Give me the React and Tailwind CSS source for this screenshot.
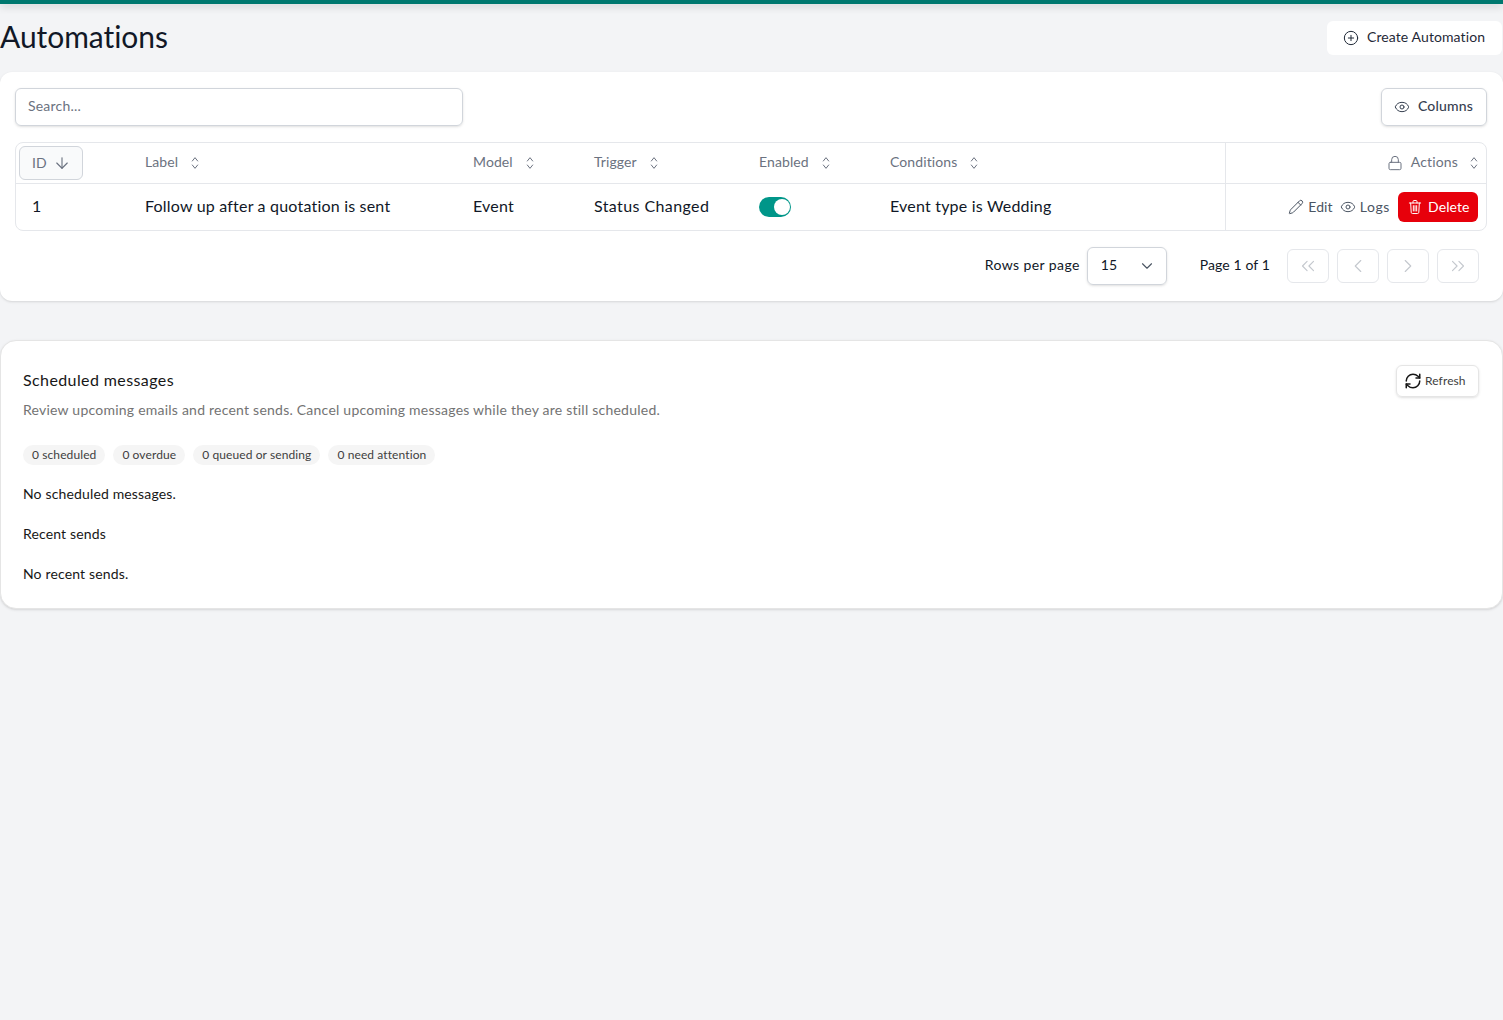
import {
  ArrowDown,
  ChevronDown,
  ChevronLeft,
  ChevronRight,
  ChevronsLeft,
  ChevronsRight,
  CirclePlus,
  Eye,
  Lock,
  Pencil,
  RefreshCw,
} from 'lucide-react'

const columns = [
  { name: 'Label', width: 'w-[328px]' },
  { name: 'Model', width: 'w-[121px]' },
  { name: 'Trigger', width: 'w-[165px]' },
  { name: 'Enabled', width: 'w-[131px]' },
  { name: 'Conditions', width: 'w-[335px]' },
]

const pageIcons = [ChevronsLeft, ChevronLeft, ChevronRight, ChevronsRight]
const badges = ['0 scheduled', '0 overdue', '0 queued or sending', '0 need attention']

function SortIcon() {
  return (
    <svg viewBox="0 0 24 24" fill="none" stroke="currentColor" strokeWidth="1.5" strokeLinecap="round" strokeLinejoin="round" className="w-[16px] h-[16px] mt-[2px]">
      <path d="M8 9l4-5 4 5" />
      <path d="M8 15l4 5 4-5" />
    </svg>
  )
}

function TrashIcon() {
  return (
    <svg viewBox="0 0 24 24" fill="none" stroke="currentColor" strokeWidth="1.5" strokeLinecap="round" strokeLinejoin="round" className="w-[16px] h-[16px]">
      <path d="M3.5 6h17" />
      <path d="M5.5 6l.8 14a2 2 0 0 0 2 1.8h7.4a2 2 0 0 0 2-1.8l.8-14" />
      <path d="M9 6V3.8A1.5 1.5 0 0 1 10.5 2.3h3A1.5 1.5 0 0 1 15 3.8V6" />
      <path d="M9.5 10v8" />
      <path d="M12 10v8" />
      <path d="M14.5 10v8" />
    </svg>
  )
}

function Toggle() {
  return (
    <div className="flex items-center w-[32px] h-[20px] rounded-full bg-[#009689] pl-[15px]">
      <div className="w-[16px] h-[16px] rounded-full bg-white" />
    </div>
  )
}

export default function App() {
  return (
    <div className="min-h-[1020px] bg-[#f3f4f6] text-[#111827] font-['Lato',sans-serif] tracking-[0.2px]">
      <div className="h-[4px] bg-[#00786f] shadow-[0_2px_8px_rgba(0,0,0,0.2)]" />

      {/* Page header */}
      <div className="flex items-center justify-between h-[68px] pr-px">
        <h1 className="text-[30px] leading-9 -mt-[4px] tracking-[-0.05px]">Automations</h1>
        <button className="flex items-center gap-[8px] h-[34px] w-[175px] pl-[16px] bg-white rounded-md text-sm tracking-[0.1px] text-[#1f2937]">
          <CirclePlus className="w-[16px] h-[16px]" strokeWidth={1.5} />
          <span className="pb-[2px]">Create Automation</span>
        </button>
      </div>

      {/* Table card */}
      <div className="bg-white rounded-xl shadow-sm pl-[15px] pr-[16px] pt-[16px] h-[229px]">
        <div className="flex items-center justify-between">
          <div className="flex items-center w-[448px] h-[38px] px-[12px] pb-[2px] border border-[#d1d5db] rounded-md shadow-sm text-sm text-[#6b7280]">
            Search...
          </div>
          <button className="flex items-center gap-[8px] w-[106px] h-[38px] pl-[12px] border border-[#d1d5db] rounded-md shadow-sm text-sm font-medium tracking-[0.15px] text-[#374151]">
            <Eye className="w-[16px] h-[16px]" strokeWidth={1.5} />
            <span className="pb-[2px]">Columns</span>
          </button>
        </div>

        <div className="mt-[16px] border border-[#e5e7eb] rounded-lg">
          <div className="flex h-[41px] border-b border-[#e5e7eb] text-sm tracking-[0.1px] text-[#6b7280]">
            <div className="flex items-center w-[129px] pl-[3px]">
              <div className="flex items-center gap-[6px] w-[64px] h-[34px] pl-[12px] bg-[#f9fafb] border border-[#d1d5db] rounded-md">
                <span className="pb-[1px]">ID</span>
                <ArrowDown className="w-[18px] h-[18px]" strokeWidth={1.5} />
              </div>
            </div>
            {columns.map((col) => (
              <div key={col.name} className={`flex items-center gap-[9px] pb-[2px] ${col.width}`}>
                {col.name}
                <SortIcon />
              </div>
            ))}
            <div className="flex flex-1 items-center justify-end gap-[8px] pr-[4px] pb-[2px] border-l border-[#e5e7eb]">
              <Lock className="w-[16px] h-[16px] mt-[2px]" strokeWidth={1.5} />
              <span className="tracking-[0.15px]">Actions</span>
              <SortIcon />
            </div>
          </div>

          <div className="flex h-[46px] text-base">
            <div className="flex items-center w-[129px] pl-[16px] pb-[2px]">1</div>
            <div className="flex items-center w-[328px] pb-[2px]">Follow up after a quotation is sent</div>
            <div className="flex items-center w-[121px] pb-[2px]">Event</div>
            <div className="flex items-center w-[165px] pb-[2px] tracking-[0.4px]">Status Changed</div>
            <div className="flex items-center w-[131px] pb-[1px]"><Toggle /></div>
            <div className="flex items-center w-[335px] pb-[2px]">Event type is Wedding</div>
            <div className="flex flex-1 items-center justify-end pr-[8px] border-l border-[#e5e7eb] text-sm tracking-[0.1px] text-[#4b5563]">
              <span className="flex items-center gap-[4px]">
                <Pencil className="w-[16px] h-[16px]" strokeWidth={1.5} />
                Edit
              </span>
              <span className="flex items-center gap-[4px] ml-[7px]">
                <Eye className="w-[16px] h-[16px]" strokeWidth={1.5} />
                <span className="tracking-[0.6px]">Logs</span>
              </span>
              <button className="flex items-center gap-[5px] h-[30px] w-[80px] ml-[8px] pl-[9px] pb-[1px] bg-[#e7000b] rounded-md text-white">
                <TrashIcon />
                Delete
              </button>
            </div>
          </div>
        </div>

        <div className="flex items-center justify-end mt-[16px] pr-[8px] text-sm">
          <span className="pb-[2px] tracking-[0.4px]">Rows per page</span>
          <div className="flex items-center justify-between w-[80px] h-[38px] ml-[7px] pl-[13px] pr-[10px] border border-[#d1d5db] rounded-md shadow-sm">
            <span className="pb-[2px]">15</span>
            <ChevronDown className="w-[18px] h-[18px] text-[#4b5563]" strokeWidth={1.5} />
          </div>
          <span className="ml-[33px] pb-[2px] tracking-[0.1px]">Page 1 of 1</span>
          <div className="flex gap-[8px] ml-[17px]">
            {pageIcons.map((Icon, i) => (
              <div key={i} className="flex items-center justify-center w-[42px] h-[34px] border border-[#e5e7eb] rounded-md text-[#c4c8ce]">
                <Icon className="w-[22px] h-[22px]" strokeWidth={1.25} />
              </div>
            ))}
          </div>
        </div>
      </div>

      {/* Scheduled messages */}
      <div className="mt-[39px] h-[269px] bg-white border border-[#e5e5e5] rounded-2xl shadow-sm pl-[22px] pr-[23px] pt-[15px] text-[#171717]">
        <div className="flex items-start justify-between">
          <div>
            <h2 className="mt-[12px] text-base leading-6 tracking-[0.4px]">Scheduled messages</h2>
            <p className="mt-[8px] text-sm leading-5 tracking-[0.23px] text-[#737373]">
              Review upcoming emails and recent sends. Cancel upcoming messages while they are still scheduled.
            </p>
          </div>
          <button className="flex items-center gap-[3px] h-[32px] w-[83px] pl-[7px] mt-[9px] border border-[#e5e5e5] rounded-md shadow-sm text-xs tracking-[0.1px] text-[#404040]">
            <RefreshCw className="w-[18px] h-[18px] text-[#171717]" strokeWidth={2} />
            Refresh
          </button>
        </div>
        <div className="flex gap-[8px] mt-[25px]">
          {badges.map((b) => (
            <span key={b} className="flex items-center h-[20px] px-[9px] rounded-full bg-[#f5f5f5] text-xs tracking-[0.1px] text-[#404040]">{b}</span>
          ))}
        </div>
        <div className="flex flex-col gap-[20px] mt-[19px] text-sm leading-5 tracking-[0.15px]">
          <p>No scheduled messages.</p>
          <p>Recent sends</p>
          <p>No recent sends.</p>
        </div>
      </div>
    </div>
  )
}
